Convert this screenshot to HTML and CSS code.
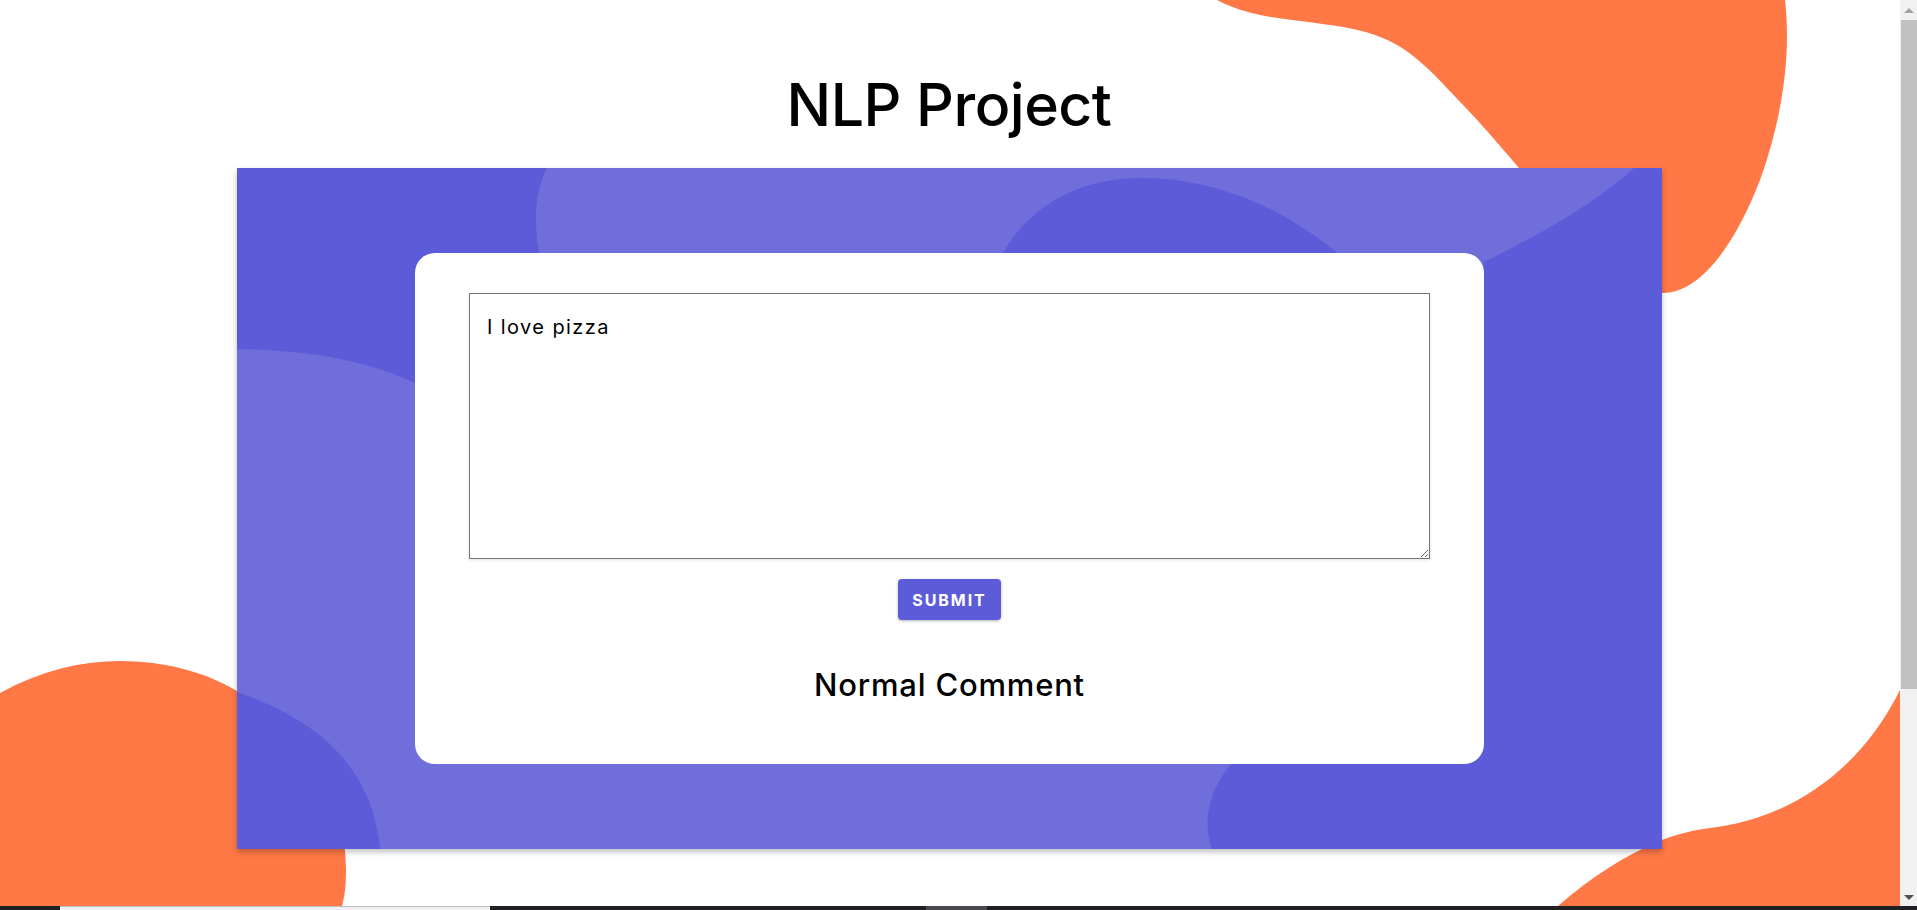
FILE: index.html
```html
<!DOCTYPE html>
<html lang="en">
<head>
    <meta charset="UTF-8">
    <meta name="viewport" content="width=device-width, initial-scale=1.0">
    <title>NLP Project</title>
    <link rel="stylesheet" href="styles.css">
</head>
<body>
    <div class="window">
        <main class="page">
            <!-- orange background blobs -->
            <svg class="page-blobs" viewBox="0 0 1900 906" aria-hidden="true">
                <path d="M1217 0C1240 12 1262 16 1285 19C1320 24 1350 26 1375 35C1410 47 1430 70 1465 107C1483 126 1501 147 1519 168L1600 293L1663 293C1700 293 1735 245 1760 180C1780 125 1792 60 1785 0Z"/>
                <path d="M0 693C40 671 80 661 120 661C165 661 205 672 237 691C300 720 346 790 346 870C346 885 345 895 342 906L0 906Z"/>
                <path d="M1558 906C1590 878 1625 855 1662 840C1680 833 1695 830 1710 828C1780 820 1855 780 1900 690L1900 906Z"/>
            </svg>

            <h1 class="title">NLP Project</h1>

            <section class="panel">
                <svg class="panel-blobs" viewBox="0 0 1425 681" aria-hidden="true">
                    <path class="blob-light" d="M310 0C302 16 299 32 299 50C299 62 300 74 302 85L302 300L178 300L178 215C130 192 70 182 0 181L0 681L975 681C966 655 970 625 994 596L1247 300L1247 94C1300 68 1355 38 1397 0Z"/>
                    <path class="blob-dark" d="M766 85C793 37 843 10 905 10C973 10 1043 37 1100 85L1100 200L766 200Z"/>
                    <path class="blob-dark" d="M0 524C75 550 135 595 143 681L0 681Z"/>
                </svg>

                <div class="card">
                    <textarea class="comment-box" spellcheck="false">I love pizza</textarea>
                    <button class="submit-btn" type="button">Submit</button>
                    <h2 class="result">Normal Comment</h2>
                </div>
            </section>
        </main>

        <div class="scrollbar">
            <span class="arrow arrow-up"></span>
            <div class="thumb"></div>
            <span class="arrow arrow-down"></span>
        </div>
    </div>

    <div class="taskbar">
        <span class="task task-active"></span>
        <span class="task task-hover"></span>
    </div>
</body>
</html>
```

FILE: styles.css
```css
:root {
    --purple: #5c5bd8;
    --purple-light: #6f6eda;
    --orange: #ff7846;
}

* {
    box-sizing: border-box;
}

html, body {
    height: 100%;
}

body {
    margin: 0;
    display: flex;
    flex-direction: column;
    overflow: hidden;
    background: white;
    color: black;
    font-family: Inter, 'Open Sans', sans-serif;
}

.window {
    flex: 1;
    display: flex;
    min-height: 0;
}

.page {
    flex: 1;
    position: relative;
    overflow: hidden;
}

.page-blobs {
    position: absolute;
    top: 0;
    left: 0;
    width: 1900px;
    height: 906px;
    fill: var(--orange);
}

.title {
    position: relative;
    margin: 0;
    height: 168px;
    padding: 68px 2px 0 0;
    line-height: 74px;
    font-size: 59px;
    font-weight: 500;
    text-align: center;
    letter-spacing: -0.5px;
}

.panel {
    position: relative;
    width: 1425px;
    height: 681px;
    margin-left: 237px;
    padding-top: 85px;
    background: var(--purple);
    box-shadow: 0 3px 6px rgba(0, 0, 0, 0.25);
}

.panel-blobs {
    position: absolute;
    top: 0;
    left: 0;
    width: 100%;
    height: 100%;
}

.blob-light {
    fill: var(--purple-light);
}

.blob-dark {
    fill: var(--purple);
}

.card {
    position: relative;
    width: 1069px;
    height: 511px;
    margin-left: 178px;
    padding: 40px 54px 0;
    display: flex;
    flex-direction: column;
    align-items: center;
    background: white;
    border-radius: 20px;
}

.comment-box {
    display: block;
    width: 100%;
    height: 266px;
    padding: 22px 17px;
    border: 1px solid #767676;
    border-radius: 0;
    outline: none;
    resize: both;
    font-family: Inter, sans-serif;
    font-size: 20px;
    letter-spacing: 1.4px;
    line-height: 22px;
    color: black;
    box-shadow: 0 1px 3px rgba(0, 0, 0, 0.12);
}

.submit-btn {
    width: 103px;
    height: 41px;
    margin-top: 20px;
    padding: 0;
    border: none;
    border-radius: 4px;
    background: var(--purple);
    color: white;
    font-family: Inter, sans-serif;
    font-size: 16px;
    font-weight: 700;
    letter-spacing: 1.9px;
    text-transform: uppercase;
    box-shadow: 0 1px 3px rgba(0, 0, 0, 0.3);
}

.result {
    margin: 47px 0 0;
    font-size: 31px;
    font-weight: 500;
    line-height: 36px;
    letter-spacing: 0.8px;
}

.scrollbar {
    width: 17px;
    display: flex;
    flex-direction: column;
    align-items: center;
    background: #f1f1f1;
}

.arrow {
    width: 0;
    height: 0;
    margin: 8px 0;
    border-left: 5px solid transparent;
    border-right: 5px solid transparent;
}

.arrow-up {
    margin-bottom: 7px;
    border-bottom: 5px solid #a3a3a3;
}

.arrow-down {
    margin-top: auto;
    margin-bottom: 6px;
    border-top: 5px solid #505050;
}

.thumb {
    width: 100%;
    height: 669px;
    margin-left: 1px;
    background: #c1c1c1;
}

.taskbar {
    flex: none;
    height: 4px;
    display: flex;
    background: #202124;
}

.task-active {
    width: 430px;
    margin-left: 60px;
    background: #f1f1f1;
    border-top: 1px solid #bdbdbd;
}

.task-hover {
    width: 61px;
    margin-left: 436px;
    background: #4a4a4f;
}
```
